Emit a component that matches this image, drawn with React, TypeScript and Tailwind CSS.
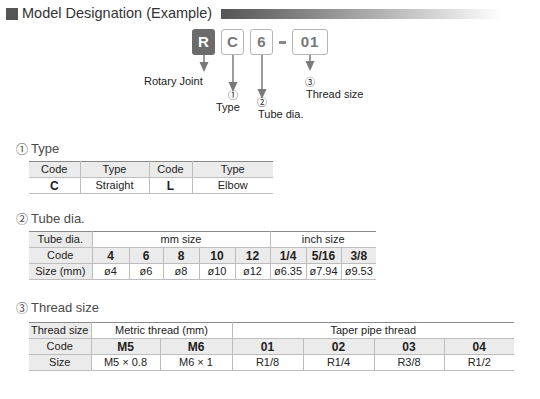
const cell = 'border-l border-b border-[#bdbdbd] first:border-l-0 p-0 h-[16px] text-center align-middle leading-none';
const gray = 'bg-[#ebebeb]';
const circ = "font-['Noto_Sans_CJK_JP',sans-serif]";

function SectionTitle({ n, children }: { n: string; children: React.ReactNode }) {
  return (
    <div className="ml-[16px] flex items-center gap-[3px] text-[13px] leading-[16px] text-[#4a4a4a]">
      <span className={`${circ} text-[12px]`}>{n}</span>
      <span>{children}</span>
    </div>
  );
}

function Arrow({ x, y1, y2 }: { x: number; y1: number; y2: number }) {
  return (
    <g>
      <line x1={x} y1={y1} x2={x} y2={y2 - 9} stroke="#7a7a7a" strokeWidth={1.5} />
      <polygon points={`${x - 4.5},${y2 - 10} ${x + 4.5},${y2 - 10} ${x},${y2}`} fill="#7a7a7a" />
    </g>
  );
}

export default function App() {
  return (
    <div className="h-[399px] w-[540px] overflow-hidden bg-white font-['Liberation_Sans',Arial,sans-serif] text-[#222]">
      {/* heading */}
      <div className="ml-[6px] mt-[7px] flex h-[13px] items-center">
        <div className="h-[12px] w-[12px] bg-[#555]" />
        <span className="ml-[4px] text-[14.5px] leading-none text-[#333]">Model Designation (Example)</span>
        <div className="ml-[9px] h-[10px] w-[280px] bg-gradient-to-r from-[#555] to-white" />
      </div>

      {/* designation diagram */}
      <div className="relative h-[102px] text-[11px] leading-[12px]">
        <svg className="absolute inset-0" width="540" height="102">
          <Arrow x={204} y1={35} y2={52} />
          <Arrow x={233} y1={35} y2={72} />
          <Arrow x={262} y1={35} y2={79} />
          <Arrow x={310} y1={35} y2={51} />
        </svg>
        <div className="absolute left-[192px] top-[9px] flex h-[26px] w-[23px] items-center justify-center rounded-[3px] bg-[#6b6b6b] text-[15px] font-bold text-white">
          R
        </div>
        <div className="absolute left-[221px] top-[9px] flex h-[26px] w-[23px] items-center justify-center rounded-[3px] border border-[#b5b5b5] bg-white text-[15px] font-bold text-[#777]">
          C
        </div>
        <div className="absolute left-[250px] top-[9px] flex h-[26px] w-[23px] items-center justify-center rounded-[3px] border border-[#b5b5b5] bg-white text-[15px] font-bold text-[#777]">
          6
        </div>
        <div className="absolute left-[279px] top-[21px] h-[3px] w-[7px] bg-[#888]" />
        <div className="absolute left-[292px] top-[9px] flex h-[26px] w-[36px] items-center justify-center rounded-[3px] border border-[#b5b5b5] bg-white text-[15px] font-bold tracking-[1px] text-[#777]">
          01
        </div>

        <div className="absolute left-[144px] top-[55px]">Rotary Joint</div>
        <div className={`absolute left-[228px] top-[70px] text-[10px] leading-[10px] ${circ}`}>①</div>
        <div className="absolute left-[216px] top-[81px]">Type</div>
        <div className={`absolute left-[257px] top-[77px] text-[10px] leading-[10px] ${circ}`}>②</div>
        <div className="absolute left-[258px] top-[88px]">Tube dia.</div>
        <div className={`absolute left-[305px] top-[57px] text-[10px] leading-[10px] ${circ}`}>③</div>
        <div className="absolute left-[306px] top-[68px]">Thread size</div>
      </div>

      {/* ① Type */}
      <div className="mt-[19px]">
        <SectionTitle n="①">Type</SectionTitle>
        <table className="ml-[29px] mt-[4px] table-fixed border-t border-[#8a8a8a] text-[11px]">
          <colgroup>
            <col className="w-[51px]" />
            <col className="w-[69px]" />
            <col className="w-[43px]" />
            <col className="w-[81px]" />
          </colgroup>
          <tbody>
            <tr className={gray}>
              <td className={`${cell} h-[15px]`}>Code</td>
              <td className={`${cell} h-[15px]`}>Type</td>
              <td className={`${cell} h-[15px]`}>Code</td>
              <td className={`${cell} h-[15px]`}>Type</td>
            </tr>
            <tr>
              <td className={`${cell} h-[15px] text-[12px] font-bold`}>C</td>
              <td className={`${cell} h-[15px]`}>Straight</td>
              <td className={`${cell} h-[15px] text-[12px] font-bold`}>L</td>
              <td className={`${cell} h-[15px]`}>Elbow</td>
            </tr>
          </tbody>
        </table>
      </div>

      {/* ② Tube dia. */}
      <div className="mt-[17px]">
        <SectionTitle n="②">Tube dia.</SectionTitle>
        <table className="ml-[29px] mt-[4px] table-fixed border-t border-[#8a8a8a] text-[11px]">
          <colgroup>
            <col className="w-[63px]" />
            <col className="w-[37px]" />
            <col className="w-[34px]" />
            <col className="w-[36px]" />
            <col className="w-[36px]" />
            <col className="w-[35px]" />
            <col className="w-[36px]" />
            <col className="w-[35px]" />
            <col className="w-[35px]" />
          </colgroup>
          <tbody>
            <tr>
              <td className={`${cell} ${gray}`}>Tube dia.</td>
              <td className={cell} colSpan={5}>mm size</td>
              <td className={cell} colSpan={3}>inch size</td>
            </tr>
            <tr className={gray}>
              <td className={cell}>Code</td>
              {['4', '6', '8', '10', '12', '1/4', '5/16', '3/8'].map((c) => (
                <td key={c} className={`${cell} text-[12px] font-bold`}>{c}</td>
              ))}
            </tr>
            <tr>
              <td className={`${cell} ${gray}`}>Size (mm)</td>
              {['ø4', 'ø6', 'ø8', 'ø10', 'ø12', 'ø6.35', 'ø7.94', 'ø9.53'].map((s) => (
                <td key={s} className={cell}>{s}</td>
              ))}
            </tr>
          </tbody>
        </table>
      </div>

      {/* ③ Thread size */}
      <div className="mt-[20px]">
        <SectionTitle n="③">Thread size</SectionTitle>
        <table className="ml-[29px] mt-[6px] table-fixed border-t border-[#8a8a8a] text-[11px]">
          <colgroup>
            <col className="w-[62px]" />
            <col className="w-[69px]" />
            <col className="w-[72px]" />
            <col className="w-[71px]" />
            <col className="w-[71px]" />
            <col className="w-[70px]" />
            <col className="w-[70px]" />
          </colgroup>
          <tbody>
            <tr>
              <td className={`${cell} ${gray}`}>Thread size</td>
              <td className={cell} colSpan={2}>Metric thread (mm)</td>
              <td className={cell} colSpan={4}>Taper pipe thread</td>
            </tr>
            <tr className={gray}>
              <td className={cell}>Code</td>
              {['M5', 'M6', '01', '02', '03', '04'].map((c) => (
                <td key={c} className={`${cell} text-[12px] font-bold`}>{c}</td>
              ))}
            </tr>
            <tr>
              <td className={`${cell} ${gray}`}>Size</td>
              {['M5 × 0.8', 'M6 × 1', 'R1/8', 'R1/4', 'R3/8', 'R1/2'].map((s) => (
                <td key={s} className={cell}>{s}</td>
              ))}
            </tr>
          </tbody>
        </table>
      </div>
    </div>
  );
}
